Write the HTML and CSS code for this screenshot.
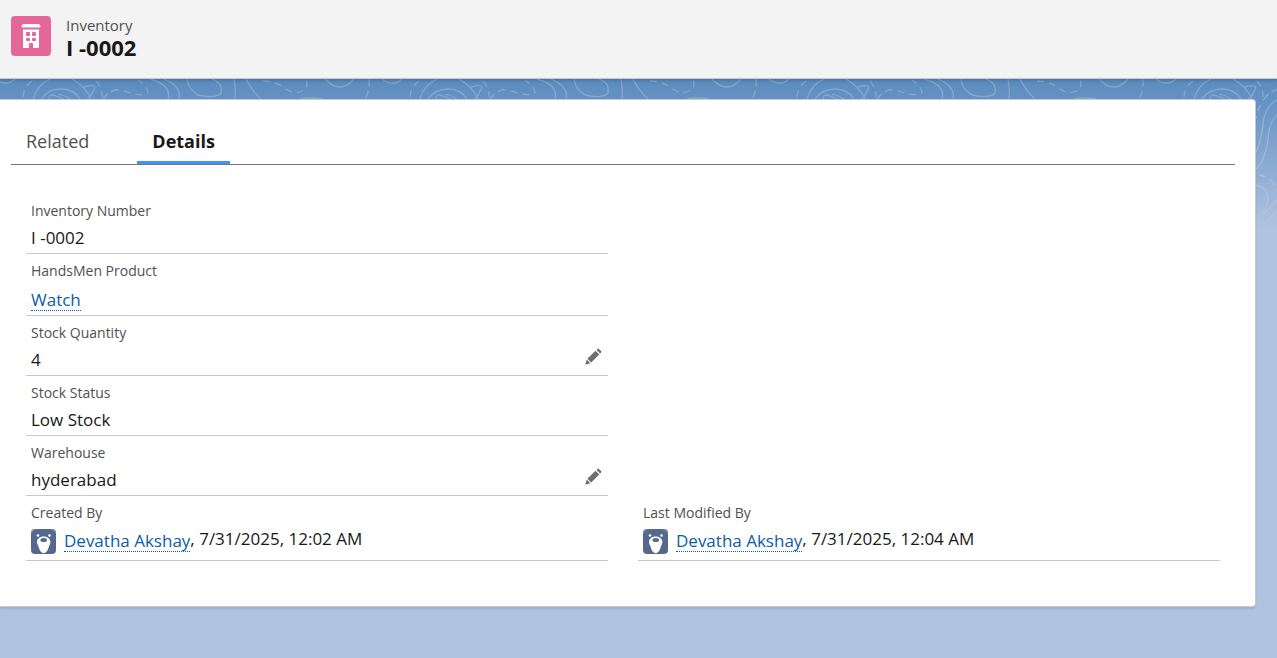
FILE: index.html
```html
<!DOCTYPE html>
<html lang="en">
<head>
<meta charset="utf-8">
<meta name="viewport" content="width=device-width, initial-scale=1">
<title>I -0002 | Inventory</title>
<link rel="stylesheet" href="styles.css">
</head>
<body>
<svg class="defs" width="0" height="0" aria-hidden="true">
  <symbol id="pencil" viewBox="0 0 18 18">
    <path fill="#706e6b" d="M11.500 2.700l3.800 3.800-8.100 8.100-3.800-3.800zM12.500 1.900l1-1q.7-.6 1.400 0l2.200 2.200q.6.7 0 1.400l-1 1zM2.700 11.600l3.700 3.700-4.500 1.300q-.7.1-.5-.6z"/>
  </symbol>
  <symbol id="bear" viewBox="0 0 25 25">
    <rect width="25" height="25" rx="4" fill="#54698d"/>
    <path d="M0 5V4Q0 0 4 0h2Q2 1 0 5zM25 5V4q0-4-4-4h-2q4 1 6 5z" fill="#8494b0"/>
    <circle cx="7" cy="6.500" r="1.300" fill="#fff"/><circle cx="18.500" cy="6.500" r="1.300" fill="#fff"/>
    <path d="M12.700 7.500C8.500 7.500 6 10 6 13c0 2 1.300 3.600 1.800 5.500.8 3.300 2.700 5.700 4.900 5.700s4.100-2.400 4.900-5.700c.5-1.900 1.800-3.500 1.800-5.500 0-3-2.500-5.500-6.700-5.500z" fill="#fff"/>
    <ellipse cx="12.700" cy="11" rx="3.300" ry="2" fill="#54698d"/>
  </symbol>
</svg>
<header class="page-header">
  <svg class="entity-icon" viewBox="0 0 40 40" aria-hidden="true">
    <rect width="40" height="40" rx="4" fill="#e56798"/>
    <path fill="#fff" d="M12.500 8h15q2 0 2 2.500 0 1-1.500 1H12q-1.500 0-1.500-1Q10.500 8 12.500 8zM12 13.500h16V31q0 1-1 1h-5v-4q0-1-1-1h-2q-1 0-1 1v4h-5q-1 0-1-1z"/>
    <g fill="#e56798"><rect x="15" y="16" width="4" height="4" rx="1"/><rect x="21" y="16" width="4" height="4" rx="1"/><rect x="15" y="22" width="4" height="3" rx="1"/><rect x="21" y="22" width="4" height="3" rx="1"/></g>
  </svg>
  <h1 class="title"><span class="entity">Inventory</span><span class="record">I -0002</span></h1>
</header>
<main class="canvas">
  <svg class="backdrop" aria-hidden="true">
    <defs>
      <pattern id="contours" width="387" height="170" patternUnits="userSpaceOnUse">
        <g fill="none" stroke="#fff" stroke-opacity=".22" stroke-width="1.300">
          <path d="M0 3Q9 6 15 0M382 0Q385 3 388 3M33 20Q37 6 50 0M72 0Q86 8 91 20M84 8Q99 4 93 12 91 18 87 20M41 20Q48 10 61 10T80 20M49 20Q49 14 56 17L64 20M58 16Q60 14 70 20M150 0Q172 6 168 20M164 0Q182 8 179 20M187 0Q188 10 198 16 216 20 221 14 223 4 212 0M234 0Q236 10 235 20M246 0Q252 12 261 20M325 0Q340 16 354 0M300 20Q311 18 322 20"/>
          <path d="M117 20Q104 27 102 45 100 64 95 73M117 35Q108 42 107 60 104 82 95 90M95 106Q107 109 107 120T95 137M117 62V74M117 119Q108 130 95 142M117 130L100 150"/>
          <path stroke-dasharray="7 5" d="M32 2Q23 8 23 20M96 2Q102 8 102 18M103 20Q110 10 120 11L135 15Q147 17 148 13 146 6 138 1M263 2Q275 2 283 8 295 18 306 10 308 5 306 0M369 0Q370 12 365 20M98 96Q113 98 117 115M117 10Q98 18 95 40"/>
        </g>
      </pattern>
      <linearGradient id="fade" x2="0" y2="1"><stop offset="0" stop-color="#fff"/><stop offset=".6" stop-color="#fff"/><stop offset="1" stop-color="#000"/></linearGradient>
      <mask id="fade-mask"><rect width="100%" height="160" fill="url(#fade)"/></mask>
    </defs>
    <rect width="100%" height="160" fill="url(#contours)" mask="url(#fade-mask)"/>
  </svg>
  <article class="card">
    <div class="tabs" role="tablist">
      <button class="tab" role="tab" aria-selected="false">Related</button>
      <button class="tab active" role="tab" aria-selected="true">Details</button>
    </div>
    <div class="details" role="tabpanel">
      <dl class="column">
        <div class="field"><dt>Inventory Number</dt><dd>I -0002</dd></div>
        <div class="field linked"><dt>HandsMen Product</dt><dd><a href="#">Watch</a></dd></div>
        <div class="field"><dt>Stock Quantity</dt><dd>4<button class="edit" aria-label="Edit Stock Quantity"><svg><use href="#pencil"/></svg></button></dd></div>
        <div class="field"><dt>Stock Status</dt><dd>Low Stock</dd></div>
        <div class="field"><dt>Warehouse</dt><dd>hyderabad<button class="edit" aria-label="Edit Warehouse"><svg><use href="#pencil"/></svg></button></dd></div>
        <div class="field person"><dt>Created By</dt><dd><svg class="avatar" aria-hidden="true"><use href="#bear"/></svg><a href="#">Devatha Akshay</a><span class="date">, 7/31/2025, 12:02 AM</span></dd></div>
      </dl>
      <dl class="column">
        <div class="field person"><dt>Last Modified By</dt><dd><svg class="avatar" aria-hidden="true"><use href="#bear"/></svg><a href="#">Devatha Akshay</a><span class="date">, 7/31/2025, 12:04 AM</span></dd></div>
      </dl>
    </div>
  </article>
</main>
</body>
</html>
```
FILE: styles.css
```css
* { box-sizing: border-box; }
body {
  margin: 0;
  min-height: 100vh;
  display: flex;
  flex-direction: column;
  background: #b0c4df;
  color: #181818;
  font-family: "Segoe UI", "Open Sans", sans-serif;
  font-size: 17px;
}
.defs { position: absolute; }
button { border: 0; padding: 0; background: none; font: inherit; color: inherit; cursor: pointer; }
.page-header {
  position: relative;
  z-index: 1;
  display: flex;
  align-items: flex-start;
  gap: 15px;
  padding: 15px 11px 19px;
  background: #f3f3f3;
  border-bottom: 1px solid #c9c9c9;
  box-shadow: 0 2px 3px rgba(0, 0, 0, .16);
}
.entity-icon { width: 40px; height: 40px; margin-top: 1px; }
.title { display: flex; flex-direction: column; margin: 0; }
.entity { font-size: 15px; font-weight: 400; line-height: 20px; color: #505050; }
.record { font-size: 22px; font-weight: 700; line-height: 24px; }
.canvas {
  position: relative;
  flex: 1;
  padding: 20px 21px 51px 0;
  background: linear-gradient(#5a8cbf 0, #6692c4 22px, #b0c4df 150px);
}
.backdrop { position: absolute; top: 0; left: 0; width: 100%; height: 160px; }
.card {
  position: relative;
  padding: 20px 20px 45px 11px;
  background: #fff;
  border: 1px solid #c9c9c9;
  border-left: 0;
  border-radius: 0 4px 4px 0;
  box-shadow: 0 2px 2px rgba(0, 0, 0, .1);
}
.tabs { display: flex; gap: 33px; height: 45px; border-bottom: 1px solid #747474; }
.tab { padding: 0 15px; font-size: 18px; line-height: 42px; color: #505050; border-bottom: 3px solid transparent; }
.tab.active { font-weight: 700; color: #181818; border-bottom-color: #4094fb; }
.details { display: grid; grid-template-columns: 1fr 1fr; gap: 30px; padding: 29px 15px 0; }
.column { display: flex; flex-direction: column; justify-content: flex-end; margin: 0; }
.field { min-height: 60px; padding: 7px 5px 0; border-bottom: 1px solid #c9c9c9; }
dt { font-size: 14px; line-height: 20px; color: #505050; }
dd { display: flex; align-items: flex-start; margin: 0; padding-top: 5px; line-height: 24px; }
.linked { min-height: 62px; }
.linked dd { padding-top: 9px; }
.person { min-height: 65px; }
a { color: #0b5cab; text-decoration: none; border-bottom: 1px dotted #0b5cab; line-height: 20px; }
.edit { margin: 0 1px 0 auto; width: 18px; height: 18px; }
.edit svg { display: block; width: 18px; height: 18px; }
.avatar { width: 25px; height: 25px; margin-right: 8px; }
.person dd { padding-top: 6px; }
.person a { margin-top: 2px; }
.date { line-height: 20px; }
```
